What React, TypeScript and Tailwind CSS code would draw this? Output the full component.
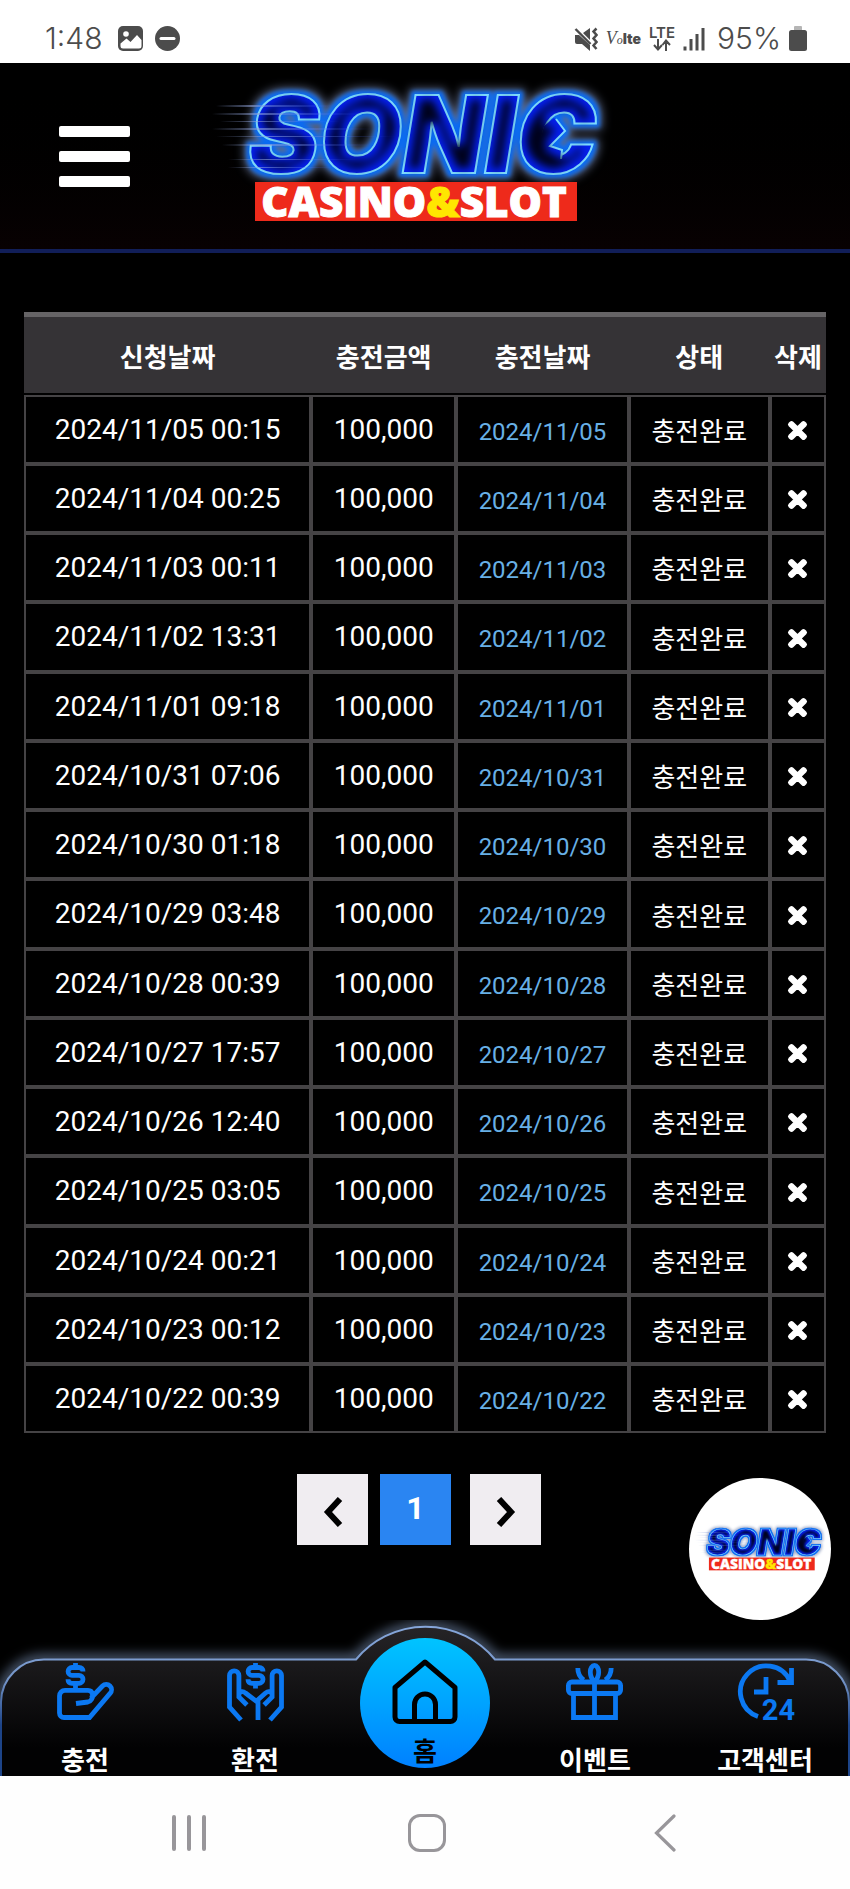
import { useId, type ReactNode } from "react";
import { FaTimes } from "react-icons/fa";

const rows: string[][] = [
  ["2024/11/05", "00:15"],
  ["2024/11/04", "00:25"],
  ["2024/11/03", "00:11"],
  ["2024/11/02", "13:31"],
  ["2024/11/01", "09:18"],
  ["2024/10/31", "07:06"],
  ["2024/10/30", "01:18"],
  ["2024/10/29", "03:48"],
  ["2024/10/28", "00:39"],
  ["2024/10/27", "17:57"],
  ["2024/10/26", "12:40"],
  ["2024/10/25", "03:05"],
  ["2024/10/24", "00:21"],
  ["2024/10/23", "00:12"],
  ["2024/10/22", "00:39"],
];

function Logo({ className }: { className: string }) {
  const id = useId();
  const neon = `${id}neon`;
  const streak = `${id}streak`;
  return (
    <svg viewBox="0 0 400 140" className={className} role="img" aria-label="SONIC CASINO&SLOT">
      <defs>
        <filter id={neon} x="-10%" y="-25%" width="120%" height="150%" colorInterpolationFilters="sRGB">
          <feMorphology in="SourceAlpha" operator="dilate" radius="5" result="wide" />
          <feGaussianBlur in="wide" stdDeviation="5" result="wideBlur" />
          <feFlood floodColor="#7c8cb4" floodOpacity="0.75" />
          <feComposite in2="wideBlur" operator="in" result="glow" />
          <feMorphology in="SourceAlpha" operator="dilate" radius="3" result="mid" />
          <feGaussianBlur in="mid" stdDeviation="2" result="midBlur" />
          <feFlood floodColor="#0a6cf5" />
          <feComposite in2="midBlur" operator="in" result="band" />
          <feMorphology in="SourceAlpha" operator="erode" radius="6" result="core" />
          <feGaussianBlur in="core" stdDeviation="4" result="coreBlur" />
          <feFlood floodColor="#00021c" />
          <feComposite in2="coreBlur" operator="in" result="dark" />
          <feMerge>
            <feMergeNode in="glow" />
            <feMergeNode in="band" />
            <feMergeNode in="SourceGraphic" />
            <feMergeNode in="dark" />
          </feMerge>
        </filter>
        <linearGradient id={streak} x1="0" x2="1">
          <stop offset="0" stopColor="#8fa2d8" stopOpacity="0" />
          <stop offset="0.3" stopColor="#8fa2d8" stopOpacity="0.6" />
          <stop offset="1" stopColor="#3c62ff" stopOpacity="0" />
        </linearGradient>
      </defs>
      <g filter={`url(#${neon})`}>
        <text
          x="210"
          y="87"
          textAnchor="middle"
          fontFamily="Inter, sans-serif"
          fontWeight="900"
          fontStyle="italic"
          fontSize="107"
          fill="#0520f0"
          stroke="#7fdcff"
          strokeWidth="2"
        >
          SONIC
        </text>
        <path d="M342 32l11 13-15 15 12 4-1 12-17 1-6-15 6-22z" fill="#0520f0" />
        <path d="M344 33l9 12-15 15 12 4-1 9" fill="none" stroke="#7fdcff" strokeWidth="2" />
      </g>
      <g fill={`url(#${streak})`}>
        <rect x="4" y="19" width="120" height="2" />
        <rect x="0" y="27" width="150" height="2" />
        <rect x="8" y="35" width="120" height="1" />
        <rect x="0" y="42" width="160" height="2" />
        <rect x="4" y="50" width="180" height="1" />
        <rect x="10" y="58" width="150" height="2" />
        <rect x="16" y="73" width="130" height="1" />
        <rect x="16" y="81" width="110" height="1" />
      </g>
      <rect x="43" y="96" width="322" height="39" fill="#ee2a1b" />
      <text
        x="202"
        y="131"
        textAnchor="middle"
        fontFamily="'Open Sans', sans-serif"
        fontWeight="800"
        fontSize="42"
        fill="#ffffff"
        stroke="#ffffff"
        strokeWidth="1"
      >
        CASINO<tspan fill="#ffe600" stroke="#ffe600">&amp;</tspan>SLOT
      </text>
    </svg>
  );
}

function StatusBar() {
  return (
    <div className="flex h-[63px] items-center justify-between bg-white pt-[14px] pr-[43px] pl-[45px] font-[Inter,sans-serif] text-[30px] font-light text-[#4c4c4c]">
      <div className="flex items-center gap-3">
        <span className="mr-1">1:48</span>
        <svg viewBox="0 0 25 25" className="size-[25px]" aria-hidden="true">
          <rect width="25" height="25" rx="5" fill="#4c4c4c" />
          <circle cx="8" cy="8" r="2.8" fill="#fff" />
          <path d="M2.5 20v-2.5l6-5 4 3.500 6.500-7 4.500 5V20a2.500 2.500 0 0 1-2.500 2.500h-16A2.500 2.500 0 0 1 2.500 20z" fill="#fff" />
        </svg>
        <svg viewBox="0 0 25 25" className="size-[25px]" aria-hidden="true">
          <circle cx="12.500" cy="12.500" r="12.500" fill="#4c4c4c" />
          <path d="M6 12.500h13" stroke="#fff" strokeWidth="3" strokeLinecap="round" />
        </svg>
      </div>
      <div className="flex items-center gap-2">
        <svg viewBox="0 0 24 24" className="size-6" aria-hidden="true">
          <path d="M1 8h4L16 18v6l-8-7H3a2 2 0 0 1-2-2zM9 6l7-5v12z" fill="#4c4c4c" />
          <path d="M1.500 2l15 15" stroke="#4c4c4c" strokeWidth="2.400" />
          <path d="M22.500 1.500l-3 3 3 3.500-3 3.500 3 3.500-3 3.500 3 3.500" fill="none" stroke="#4c4c4c" strokeWidth="2.500" />
        </svg>
        <span className="flex items-baseline text-base leading-none">
          <span className="font-[Liberation_Serif,serif] text-[18px] italic">V</span>
          <span className="font-[Liberation_Serif,serif] text-xs italic">o</span>
          <span className="text-[14px] font-black">lte</span>
        </span>
        <span className="flex flex-col items-center text-[15px] leading-[13px] font-semibold">
          LTE
          <svg viewBox="0 0 18 12" className="h-3 w-[18px]" aria-hidden="true">
            <path d="M5 0v10M1 6l4 4.500L9 6M13 12V2M9.500 6L13 1.500 17 6" fill="none" stroke="#4c4c4c" strokeWidth="2" />
          </svg>
        </span>
        <svg viewBox="0 0 22 24" className="h-6 w-[22px]" aria-hidden="true">
          <path d="M2 19.500v4M8 12v11.500M14 7v16.500M20 1v22.500" stroke="#4c4c4c" strokeWidth="3" />
        </svg>
        <span className="ml-1">95%</span>
        <svg viewBox="0 0 18 25" className="h-[25px] w-[18px]" aria-hidden="true">
          <rect x="5" width="8" height="5" rx="1" fill="#b5b5b5" />
          <rect y="4" width="18" height="21" rx="2.500" fill="#4c4c4c" />
        </svg>
      </div>
    </div>
  );
}

function Header() {
  return (
    <header className="flex h-[190px] items-center gap-[82px] border-b-4 border-[#111e58] bg-linear-to-b from-black to-[#080102] px-[59px]">
      <button type="button" aria-label="메뉴" className="flex w-[71px] flex-col gap-[14px]">
        <span className="h-[11px] w-full rounded-[2px] bg-white" />
        <span className="h-[11px] w-full rounded-[2px] bg-white" />
        <span className="h-[11px] w-full rounded-[2px] bg-white" />
      </button>
      <a href="#home">
        <Logo className="h-[140px] w-[400px] overflow-visible" />
      </a>
    </header>
  );
}

function HistoryTable() {
  const td = "border-2 border-[#454345] p-0 text-center align-middle";
  return (
    <table className="w-full table-fixed border-separate border-spacing-0">
      <colgroup>
        <col className="w-[35.8%]" />
        <col className="w-[18.1%]" />
        <col className="w-[21.5%]" />
        <col className="w-[17.6%]" />
        <col className="w-[7%]" />
      </colgroup>
      <thead>
        <tr className="h-[83px] text-[26px] font-bold">
          {["신청날짜", "충전금액", "충전날짜", "상태", "삭제"].map((h) => (
            <th key={h} className="border-t-[5px] border-b-2 border-t-[#666466] border-b-black bg-[#353336] p-0 pt-[6px] whitespace-nowrap">
              {h}
            </th>
          ))}
        </tr>
      </thead>
      <tbody>
        {rows.map(([date, time]) => (
          <tr key={date} className="h-[69px] nth-[4n]:h-[70px]">
            <td className={`${td} text-[28px]`}>
              {date} {time}
            </td>
            <td className={`${td} text-[28px]`}>100,000</td>
            <td className={`${td} pt-[4px] text-2xl text-[#68b0e6]`}>{date}</td>
            <td className={`${td} pt-[6px] text-[26px]`}>충전완료</td>
            <td className={`${td} pt-[2px]`}>
              <button type="button" aria-label={`${date} 삭제`} className="block w-full">
                <FaTimes className="mx-auto size-[25px] overflow-visible stroke-current stroke-[36px]" />
              </button>
            </td>
          </tr>
        ))}
      </tbody>
    </table>
  );
}

function Pagination() {
  return (
    <nav aria-label="페이지" className="mt-[41px] flex justify-center pr-[12px]">
      <button type="button" aria-label="이전" className="flex size-[71px] items-center justify-center bg-[#f0edf1] pt-1">
        <svg viewBox="0 0 20 30" className="h-[30px] w-5" aria-hidden="true">
          <path d="M17 2L5 15l12 13" fill="none" stroke="#000" strokeWidth="6" />
        </svg>
      </button>
      <button type="button" aria-current="page" className="mr-[19px] ml-3 size-[71px] bg-[#2a85f2] pb-1 text-[32px] font-bold">
        1
      </button>
      <button type="button" aria-label="다음" className="flex size-[71px] items-center justify-center bg-[#f0edf1] pt-1">
        <svg viewBox="0 0 20 30" className="h-[30px] w-5" aria-hidden="true">
          <path d="M3 2l12 13L3 28" fill="none" stroke="#000" strokeWidth="6" />
        </svg>
      </button>
    </nav>
  );
}

function Icon({ children }: { children: ReactNode }) {
  return (
    <svg viewBox="0 0 57 57" className="size-[57px] overflow-visible" fill="none" stroke="#0b78f2" strokeWidth="4.800" aria-hidden="true">
      {children}
    </svg>
  );
}

function Dollar() {
  return <path d="M26 8.500c0-2.500-1.500-4-4-4h-7a3.900 3.900 0 0 0 0 7.800h7a4 4 0 0 1 0 8h-7c-2.500 0-4-1.500-4-4M18.500 0v5M18.500 20v5.500" />;
}

const tabs: { label: string; icon: ReactNode }[] = [
  {
    label: "충전",
    icon: (
      <Icon>
        <Dollar />
        <path d="M19 40.500l12-1.500c3-.500 5-4 4.500-7.500S33 27.400 31 27.400H8a5.500 5.500 0 0 0-5.500 5.500V50A4.500 4.500 0 0 0 7 54.500h25.500L53 30.500a5 5 0 0 0-7.500-7.500L34 35" />
      </Icon>
    ),
  },
  {
    label: "환전",
    icon: (
      <Icon>
        <g transform="translate(10 0)">
          <Dollar />
        </g>
        <path d="M14 57L2.500 44V12.500a4.700 4.700 0 0 1 9.400 0V34l8 8M12 31c1.500-3 4-3 6.500-1L31 39.500V57" />
        <path d="M43 57l11.500-13V12.500a4.700 4.700 0 0 0-9.400 0V34l-8 8M45 31c-1.500-3-4-3-6.500-1L29 38.500" />
      </Icon>
    ),
  },
  {
    label: "홈",
    icon: null,
  },
  {
    label: "이벤트",
    icon: (
      <Icon>
        <rect x="2.400" y="19" width="52.200" height="11.500" rx="3.500" />
        <path d="M7.500 31v23.500h42V31M28.500 17v37" />
        <path d="M28.500 19c-3-3-4.200-7-4.200-10a4.200 6.600 0 0 1 8.400 0c0 3-1.200 7-4.200 10zM11.800 5c0 5 1.500 9 6 12M45.200 5c0 5-1.500 9-6 12" />
      </Icon>
    ),
  },
  {
    label: "고객센터",
    icon: (
      <Icon>
        <path d="M21 53.500A26 26 0 1 1 53 18M54.500 5v14.500h-14M29 14v15H17" />
        <text x="41.500" y="57" textAnchor="middle" fontFamily="Roboto, sans-serif" fontWeight="700" fontSize="29" fill="#0b78f2" stroke="none">
          24
        </text>
      </Icon>
    ),
  },
];

function TabBar() {
  return (
    <nav aria-label="하단 메뉴" className="relative h-[156px] bg-black">
      <svg viewBox="0 0 850 156" preserveAspectRatio="none" className="absolute inset-0 size-full" aria-hidden="true">
        <defs>
          <linearGradient id="tab-fill" x1="0" y1="0" x2="0" y2="1">
            <stop offset="0" stopColor="#262427" />
            <stop offset="0.250" stopColor="#1a191b" />
            <stop offset="0.800" stopColor="#020203" />
          </linearGradient>
          <linearGradient id="tab-line" x1="0" y1="0" x2="0" y2="1">
            <stop offset="0" stopColor="#86a6da" />
            <stop offset="0.350" stopColor="#7595c8" />
            <stop offset="0.650" stopColor="#1d4488" />
          </linearGradient>
          <filter id="tab-glow" x="-5%" y="-20%" width="110%" height="140%" colorInterpolationFilters="sRGB">
            <feGaussianBlur stdDeviation="6" />
          </filter>
        </defs>
        <path
          d="M1 158V82A43 43 0 0 1 44 39.500H356A90 90 0 0 1 495 39.500H806A43 43 0 0 1 849 82V158"
          fill="none"
          stroke="#5a6b86"
          strokeWidth="9"
          filter="url(#tab-glow)"
        />
        <path
          d="M1 158V82A43 43 0 0 1 44 39.500H356A90 90 0 0 1 495 39.500H806A43 43 0 0 1 849 82V158"
          fill="url(#tab-fill)"
          stroke="url(#tab-line)"
          strokeWidth="2"
        />
      </svg>
      <ul className="relative grid h-full grid-cols-5 text-[26px] leading-[30px] font-bold">
        {tabs.map((tab) => (
          <li key={tab.label} className="flex justify-center">
            {tab.icon ? (
              <a href={`#${tab.label}`} className="flex flex-col items-center gap-[26px] pt-[43px] whitespace-nowrap">
                {tab.icon}
                {tab.label}
              </a>
            ) : (
              <a
                href="#home"
                className="mt-[18px] flex size-[130px] flex-col items-center gap-[12px] rounded-full bg-linear-to-b from-[#00c4ff] to-[#0080ff] pt-[21px] text-black"
              >
                <svg viewBox="0 0 66 66" className="size-[66px] shrink-0" fill="none" stroke="#000" strokeWidth="5" strokeLinejoin="round" aria-hidden="true">
                  <path d="M33 3L63 28.500V58a4.500 4.500 0 0 1-4.500 4.500h-51A4.500 4.500 0 0 1 3 58V28.500z" />
                  <path d="M22.500 62.500V45.500a10.500 10.500 0 0 1 21 0v17" />
                </svg>
                {tab.label}
              </a>
            )}
          </li>
        ))}
      </ul>
    </nav>
  );
}

function SystemNav() {
  return (
    <div className="bg-[#fefefe] pl-1">
      <div className="mx-auto grid h-[113px] max-w-[714px] grid-cols-3 place-items-center">
        <button type="button" aria-label="최근 앱">
          <svg viewBox="0 0 36 38" className="h-[38px] w-9" stroke="#98969a" strokeWidth="4" strokeLinecap="round" aria-hidden="true">
            <path d="M3 3v32M18 3v32M33 3v32" />
          </svg>
        </button>
        <button type="button" aria-label="홈 화면" className="size-[38px] rounded-[12px] border-[3px] border-[#98969a]" />
        <button type="button" aria-label="뒤로">
          <svg viewBox="0 0 22 38" className="h-[38px] w-[22px]" fill="none" stroke="#98969a" strokeWidth="3.200" strokeLinecap="round" aria-hidden="true">
            <path d="M20 2L2.500 19 20 36" />
          </svg>
        </button>
      </div>
    </div>
  );
}

export default function App() {
  return (
    <div className="min-h-screen bg-black font-[Roboto,'Noto_Sans_CJK_KR',sans-serif] text-white">
      <StatusBar />
      <Header />
      <main className="relative px-6 pt-[59px] pb-[75px]">
        <HistoryTable />
        <Pagination />
        <a href="#site" className="absolute right-[19px] bottom-0 flex size-[142px] items-center justify-center rounded-full bg-white">
          <Logo className="h-[46px] w-[133px] overflow-visible" />
        </a>
      </main>
      <TabBar />
      <SystemNav />
    </div>
  );
}
